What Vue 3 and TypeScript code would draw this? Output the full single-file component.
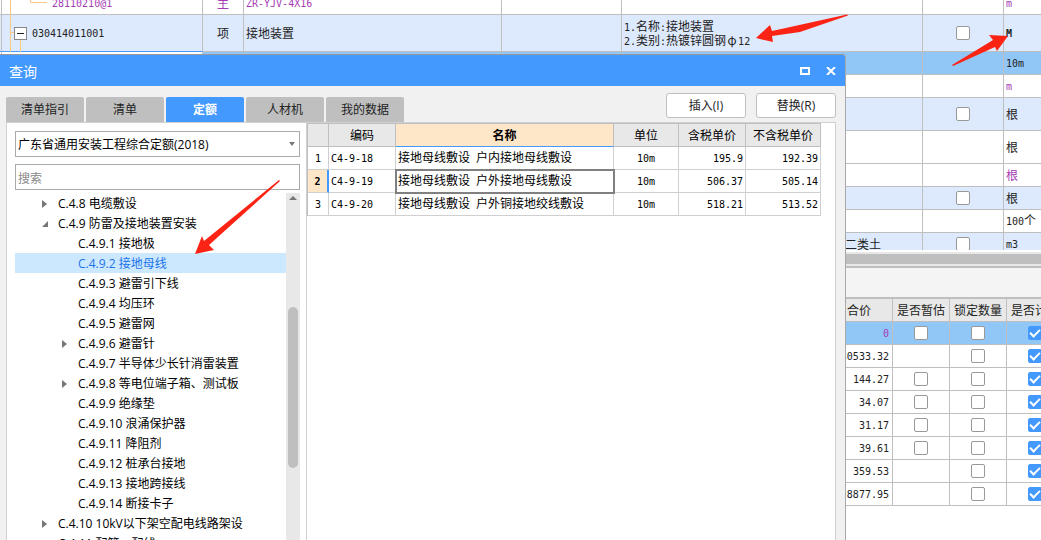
<script setup lang="ts">
import { h } from 'vue'

interface ItemRow {
  unit: string
  size: 'small' | 'medium' | 'tall'
  kind?: 'item' | 'current'
  tone?: 'purple' | 'strong'
  code?: string
  type?: string
  name?: string
  detail?: string[]
  tail?: string
  check?: boolean
}
interface CostRow {
  total: string
  estimate: boolean
  current?: boolean
}
interface TreeNode {
  label: string
  level: number
  state?: 'open' | 'closed'
  selected?: boolean
}

/* Grid text: half-width characters take exactly half a full-width cell. */
const runClass = (part: string) => (part === 'φ' ? 'symbol' : /^[\x00-\x7f]/.test(part) ? 'half' : 'full')
const GridText = (props: { text: string }) =>
  h(
    'span',
    { class: 'grid-text' },
    props.text
      .split(/([\x00-\x7f]+|φ)/)
      .filter((part) => part !== '')
      .map((part) => h('span', { class: runClass(part) }, part)),
  )
GridText.props = ['text']

const items: ItemRow[] = [
  { code: '28110210@1', type: '主', name: 'ZR-YJV-4X16', unit: 'm', size: 'small', tone: 'purple' },
  {
    code: '030414011001',
    type: '项',
    name: '接地装置',
    detail: ['1.名称:接地装置', '2.类别:热镀锌圆钢φ12'],
    unit: 'M',
    size: 'tall',
    kind: 'item',
    tone: 'strong',
    check: true,
  },
  { unit: '10m', size: 'small', kind: 'current' },
  { unit: 'm', size: 'small', tone: 'purple' },
  { unit: '根', size: 'medium', kind: 'item', check: true },
  { unit: '根', size: 'medium' },
  { unit: '根', size: 'small', tone: 'purple' },
  { unit: '根', size: 'small', kind: 'item', check: true },
  { unit: '100个', size: 'small' },
  { tail: '二类土', unit: 'm3', size: 'small', kind: 'item', check: true },
]

const costs: CostRow[] = [
  { total: '0', estimate: true, current: true },
  { total: '30533.32', estimate: false },
  { total: '144.27', estimate: true },
  { total: '34.07', estimate: true },
  { total: '31.17', estimate: true },
  { total: '39.61', estimate: true },
  { total: '359.53', estimate: false },
  { total: '8877.95', estimate: false },
]

const tabs = ['清单指引', '清单', '定额', '人材机', '我的数据']
const activeTab = '定额'

const tree: TreeNode[] = [
  { label: 'C.4.8 电缆敷设', level: 0, state: 'closed' },
  { label: 'C.4.9 防雷及接地装置安装', level: 0, state: 'open' },
  { label: 'C.4.9.1 接地极', level: 1 },
  { label: 'C.4.9.2 接地母线', level: 1, selected: true },
  { label: 'C.4.9.3 避雷引下线', level: 1 },
  { label: 'C.4.9.4 均压环', level: 1 },
  { label: 'C.4.9.5 避雷网', level: 1 },
  { label: 'C.4.9.6 避雷针', level: 1, state: 'closed' },
  { label: 'C.4.9.7 半导体少长针消雷装置', level: 1 },
  { label: 'C.4.9.8 等电位端子箱、测试板', level: 1, state: 'closed' },
  { label: 'C.4.9.9 绝缘垫', level: 1 },
  { label: 'C.4.9.10 浪涌保护器', level: 1 },
  { label: 'C.4.9.11 降阻剂', level: 1 },
  { label: 'C.4.9.12 桩承台接地', level: 1 },
  { label: 'C.4.9.13 接地跨接线', level: 1 },
  { label: 'C.4.9.14 断接卡子', level: 1 },
  { label: 'C.4.10 10kV以下架空配电线路架设', level: 0, state: 'closed' },
  { label: 'C.4.11 配管、配线', level: 0 },
]

const quotas = [
  { code: 'C4-9-18', name: '接地母线敷设 户内接地母线敷设', unit: '10m', taxed: '195.9', net: '192.39' },
  { code: 'C4-9-19', name: '接地母线敷设 户外接地母线敷设', unit: '10m', taxed: '506.37', net: '505.14' },
  { code: 'C4-9-20', name: '接地母线敷设 户外铜接地绞线敷设', unit: '10m', taxed: '518.21', net: '513.52' },
]
const currentQuota = 1
</script>

<template>
  <main class="workspace">
    <section class="items-pane">
      <table class="grid items">
        <colgroup>
          <col class="c-edge" /><col class="c-code" /><col class="c-type" /><col class="c-name" />
          <col class="c-blank" /><col class="c-detail" /><col class="c-check" /><col class="c-unit" />
        </colgroup>
        <tbody>
          <tr v-for="(row, i) in items" :key="i" :class="[row.size, row.kind, row.tone]">
            <td></td>
            <td class="code-cell">
              <svg v-if="i === 0" class="branches" width="50" height="23" aria-hidden="true">
                <path d="M8.5 0V23M28.5 0V10.5H45" />
              </svg>
              <svg v-if="i === 1" class="branches" width="30" height="37" aria-hidden="true">
                <path d="M8.5 0V37M8.5 17.5H12M18.5 24V37" />
              </svg>
              <div v-if="row.code" class="code" :class="{ leaf: i === 0 }">
                <button v-if="i === 1" class="toggle" type="button" aria-label="折叠"></button>
                <GridText :text="row.code" />
              </div>
            </td>
            <td class="center"><GridText v-if="row.type" :text="row.type" /></td>
            <td><GridText v-if="row.name" :text="row.name" /></td>
            <td></td>
            <td :class="{ continued: row.tail }">
              <div v-for="line in row.detail" :key="line" class="line"><GridText :text="line" /></div>
              <GridText v-if="row.tail" :text="row.tail" />
            </td>
            <td class="center"><input v-if="row.check" type="checkbox" :aria-label="`选择 ${row.unit}`" /></td>
            <td class="unit"><GridText :text="row.unit" /></td>
          </tr>
        </tbody>
      </table>
    </section>
    <div class="hscroll"><div class="hthumb"></div></div>
    <div class="toolbar"></div>
    <section class="costs-pane">
      <table class="grid costs">
        <colgroup>
          <col class="k-lead" /><col class="k-total" /><col class="k-check" /><col class="k-check" /><col class="k-check" />
        </colgroup>
        <thead>
          <tr>
            <th></th>
            <th><GridText text="合价" /></th>
            <th><GridText text="是否暂估" /></th>
            <th><GridText text="锁定数量" /></th>
            <th><GridText text="是否计价" /></th>
          </tr>
        </thead>
        <tbody>
          <tr v-for="(row, i) in costs" :key="i" :class="{ current: row.current, small: true }">
            <td></td>
            <td class="number" :class="{ zero: row.current }"><GridText :text="row.total" /></td>
            <td class="center"><input v-if="row.estimate" type="checkbox" aria-label="是否暂估" /></td>
            <td class="center"><input type="checkbox" aria-label="锁定数量" /></td>
            <td class="center"><input type="checkbox" checked aria-label="是否计价" /></td>
          </tr>
        </tbody>
      </table>
    </section>

    <section class="dialog" role="dialog" aria-labelledby="dialog-title">
      <header class="titlebar">
        <h1 id="dialog-title">查询</h1>
        <button type="button" aria-label="最大化">
          <svg width="10" height="8" viewBox="0 0 10 8"><path d="M1 1H9V7H1Z" /></svg>
        </button>
        <button type="button" aria-label="关闭">
          <svg width="10" height="8" viewBox="0 0 10 8"><path d="M1 0L9 8M9 0L1 8" /></svg>
        </button>
      </header>
      <div class="controls">
        <div class="tabs" role="tablist">
          <button
            v-for="tab in tabs"
            :key="tab"
            type="button"
            role="tab"
            :aria-selected="tab === activeTab"
            :class="{ active: tab === activeTab }"
          >{{ tab }}</button>
        </div>
        <div class="actions">
          <button type="button">插入(I)</button>
          <button type="button">替换(R)</button>
        </div>
      </div>
      <div class="panels">
        <aside class="browser">
          <div class="picker">
            <select aria-label="定额库">
              <option>广东省通用安装工程综合定额(2018)</option>
            </select>
            <svg width="6" height="4" viewBox="0 0 6 4" aria-hidden="true"><path d="M0 0H6L3 4Z" /></svg>
          </div>
          <input class="search" type="text" placeholder="搜索" aria-label="搜索" />
          <div class="tree-box">
            <ul class="tree" role="tree">
              <li
                v-for="node in tree"
                :key="node.label"
                role="treeitem"
                :class="{ child: node.level === 1, selected: node.selected }"
              >
                <span class="marker">
                  <svg v-if="node.state === 'closed'" width="5" height="8" viewBox="0 0 5 8"><path d="M0 0L5 4L0 8Z" /></svg>
                  <svg v-if="node.state === 'open'" width="6" height="6" viewBox="0 0 6 6"><path d="M6 0V6H0Z" /></svg>
                </span>
                <span>{{ node.label }}</span>
              </li>
            </ul>
            <div class="vscroll">
              <svg width="8" height="4" viewBox="0 0 8 4" aria-hidden="true"><path d="M0 4L4 0L8 4Z" /></svg>
              <div class="vthumb"></div>
            </div>
          </div>
        </aside>
        <div class="results">
          <table class="quota">
            <colgroup>
              <col class="q-index" /><col class="q-code" /><col class="q-name" />
              <col class="q-unit" /><col class="q-taxed" /><col class="q-net" />
            </colgroup>
            <thead>
              <tr>
                <th></th>
                <th><GridText text="编码" /></th>
                <th class="sorted"><GridText text="名称" /></th>
                <th><GridText text="单位" /></th>
                <th><GridText text="含税单价" /></th>
                <th><GridText text="不含税单价" /></th>
              </tr>
            </thead>
            <tbody>
              <tr v-for="(row, i) in quotas" :key="row.code" :class="{ chosen: i === currentQuota }">
                <th scope="row"><GridText :text="String(i + 1)" /></th>
                <td><GridText :text="row.code" /></td>
                <td class="q-title"><GridText :text="row.name" /></td>
                <td class="center"><GridText :text="row.unit" /></td>
                <td class="number"><GridText :text="row.taxed" /></td>
                <td class="number"><GridText :text="row.net" /></td>
              </tr>
            </tbody>
          </table>
        </div>
      </div>
    </section>

    <svg class="marks" aria-hidden="true">
      <path d="M756 38L770 25L772 31L847 14.5L848 15.5L800 32L772 36L773 42Z" />
      <path d="M1008 36L989 35L993 40L952 65L953 66L995 47L997 51Z" />
      <path d="M195 254L202 236L204 241L279 180L280 181L209 245L214 250Z" />
    </svg>
  </main>
</template>

<style>
body {
  margin: 0;
}
.grid-text {
  font-family: "Noto Sans CJK SC", sans-serif;
  font-size: 12px;
  white-space: pre;
}
.grid-text .half {
  font-family: "DejaVu Sans Mono", monospace;
  font-size: 10px;
}
.grid-text .symbol {
  display: inline-block;
  width: 12px;
  text-align: center;
}
</style>

<style scoped>
.workspace {
  position: relative;
  display: flex;
  flex-direction: column;
  height: 100vh;
  overflow: hidden;
  background: #fff;
  color: #222;
  font: 12px/14px "Open Sans", "Noto Sans CJK SC", sans-serif;
}
button,
input,
select {
  font: inherit;
  color: inherit;
  box-sizing: border-box;
  margin: 0;
}
button {
  padding: 0;
  border: 0;
  background: none;
}
table {
  table-layout: fixed;
  border-collapse: separate;
  border-spacing: 0;
}
th,
td {
  box-sizing: border-box;
  padding: 0 3px;
  line-height: 14px;
  text-align: left;
  vertical-align: middle;
  white-space: nowrap;
  font-weight: normal;
}
.center {
  text-align: center;
}
.number {
  text-align: right;
}

/* background grids */
.items-pane {
  flex: none;
  height: 250px;
  overflow: hidden;
}
.grid {
  width: 1084px;
}
.items {
  margin-top: -8px;
}
.grid th,
.grid td {
  border-right: 1px solid #bfbfbf;
  border-bottom: 1px solid #bfbfbf;
}
.items td {
  padding: 0 2px;
}
.c-edge { width: 2px; }
.c-code { width: 201px; }
.c-type { width: 41px; }
.c-name { width: 258px; }
.c-blank { width: 120px; }
.c-detail { width: 301px; }
.c-check { width: 81px; }
.c-unit { width: 80px; }
.grid td:first-child {
  padding: 0;
}
.small td { height: 23px; }
.medium td { height: 33px; }
.tall td { height: 37px; }
.item td { background: #dde9fd; }
.current td { background: #91c7f7; }
.items .current td:nth-child(-n + 2) {
  background: #fff;
}
.items .tall td:nth-child(-n + 2) {
  border-bottom-color: #4499ff;
}
.purple { color: #a63bb5; }
.strong .unit { font-weight: bold; }
.line {
  height: 14px;
}
.code-cell {
  position: relative;
}
.items .code-cell {
  padding: 0 0 0 12px;
}
.branches {
  position: absolute;
  left: 0;
  top: 0;
  fill: none;
  stroke: #fbc980;
}
.code {
  position: relative;
  display: flex;
  align-items: center;
  gap: 5px;
}
.code.leaf {
  padding-left: 38px;
}
.toggle {
  display: flex;
  align-items: center;
  justify-content: center;
  width: 13px;
  height: 13px;
  border: 1px solid #888;
  background: #fff;
}
.toggle::before {
  content: "";
  width: 7px;
  height: 1px;
  background: #222;
}
.items .continued {
  padding-left: 223px;
}
input[type="checkbox"] {
  appearance: none;
  display: inline-flex;
  align-items: center;
  justify-content: center;
  width: 14px;
  height: 14px;
  border: 1px solid #999;
  border-radius: 2px;
  background: #fff;
  vertical-align: middle;
}
input[type="checkbox"]:checked {
  border-color: #4499ff;
  background: #4499ff;
}
input[type="checkbox"]:checked::before {
  content: "";
  flex: none;
  width: 10px;
  height: 6px;
  margin-bottom: 3px;
  box-sizing: border-box;
  border-left: 2px solid #fff;
  border-bottom: 2px solid #fff;
  transform: rotate(-45deg);
}
.hscroll {
  flex: none;
  margin-top: 2px;
  padding: 2px 0;
  background: #e8e8e8;
}
.hthumb {
  height: 10px;
  background: #bfbfbf;
}
.toolbar {
  flex: none;
  height: 29px;
  border-top: 2px solid #bfbfbf;
  border-bottom: 2px solid #bfbfbf;
  background: #f4f4f4;
}
.costs-pane {
  overflow: hidden;
}
.costs {
  width: 1064px;
}
.k-lead { width: 826px; }
.k-total { width: 67px; }
.k-check { width: 57px; }
.costs th {
  height: 23px;
  padding: 0;
  background: #e8e8e8;
  text-align: center;
}
.zero { color: #a63bb5; }

/* query dialog */
.dialog {
  position: absolute;
  left: 0;
  top: 54px;
  bottom: 0;
  display: flex;
  flex-direction: column;
  box-sizing: border-box;
  width: 846px;
  max-width: 100%;
  overflow: hidden;
  border-top: 1px solid #999;
  border-right: 1px solid #a8a8a8;
  border-top-right-radius: 3px;
  background: #f1f1f1;
}
.titlebar {
  flex: none;
  display: flex;
  align-items: center;
  gap: 16px;
  height: 31px;
  padding: 0 9px;
  background: #4499ff;
  color: #fff;
}
.titlebar h1 {
  flex: 1;
  margin: 0;
  padding-top: 3px;
  font-size: 14px;
  font-weight: normal;
  line-height: 20px;
}
.titlebar svg {
  display: block;
  fill: none;
  stroke: #fff;
  stroke-width: 2;
}
.controls {
  flex: none;
  display: flex;
  justify-content: space-between;
  align-items: flex-end;
  height: 36px;
  padding: 0 9px 0 6px;
}
.tabs {
  display: flex;
  gap: 2px;
}
.tabs button {
  width: 78px;
  height: 25px;
  padding-top: 1px;
  border-radius: 2px 2px 0 0;
  background: #bfbfbf;
}
.tabs .active {
  background: #4499ff;
  color: #fff;
  font-weight: bold;
}
.actions {
  display: flex;
  gap: 10px;
  padding-bottom: 4px;
}
.actions button {
  width: 80px;
  height: 25px;
  border: 1px solid #bfbfbf;
  border-radius: 3px;
  background: #fff;
}
.panels {
  flex: 1;
  display: flex;
  min-height: 0;
  margin: 0 9px 0 6px;
  border: 1px solid #d0d0d0;
  border-bottom: 0;
  background: #fff;
}
.browser {
  flex: none;
  display: flex;
  flex-direction: column;
  box-sizing: border-box;
  width: 300px;
  padding: 8px 6px 0 8px;
  border-right: 1px solid #d0d0d0;
  color: #000;
}
.picker {
  position: relative;
  flex: none;
  display: flex;
  margin-bottom: 7px;
}
.picker select {
  appearance: none;
  width: 100%;
  height: 26px;
  padding: 2px 16px 0 2px;
  border: 1px solid #aaa;
  border-radius: 0;
  background: #fff;
}
.picker svg {
  position: absolute;
  right: 5px;
  top: 11px;
  fill: #777;
}
.search {
  flex: none;
  height: 26px;
  padding: 2px 2px 0;
  border: 1px solid #aaa;
  background: #fff;
}
.search::placeholder {
  color: #888;
}
.tree-box {
  flex: 1;
  display: flex;
  min-height: 0;
  margin-top: 3px;
  overflow: hidden;
}
.tree {
  flex: 1;
  margin: 0;
  padding: 0;
  list-style: none;
}
.tree li {
  display: flex;
  align-items: center;
  box-sizing: border-box;
  height: 20px;
  padding: 2px 0 0 27px;
  line-height: 18px;
  white-space: nowrap;
}
.tree .child {
  padding-left: 47px;
}
.tree .selected {
  background: #cce8ff;
  color: #1a73e8;
}
.marker {
  display: flex;
  width: 16px;
}
.marker svg {
  fill: #777;
}
.vscroll {
  flex: none;
  display: flex;
  flex-direction: column;
  align-items: center;
  width: 14px;
  padding-top: 3px;
  background: #e8e8e8;
}
.vscroll svg {
  flex: none;
  fill: #777;
}
.vthumb {
  flex: none;
  width: 10px;
  height: 161px;
  margin-top: 107px;
  border-radius: 5px;
  background: #bfbfbf;
}
.results {
  flex: 1;
  min-width: 0;
  overflow: hidden;
}
.quota {
  width: 514px;
  border-top: 1px solid #bfbfbf;
  border-left: 1px solid #bfbfbf;
  color: #000;
}
.q-index { width: 21px; }
.q-code { width: 67px; }
.q-name { width: 218px; }
.q-unit { width: 65px; }
.q-taxed { width: 67px; }
.q-net { width: 75px; }
.quota th,
.quota td {
  height: 23px;
  padding: 0 2px;
  border-right: 1px solid #d0d0d0;
  border-bottom: 1px solid #d0d0d0;
}
.quota th {
  padding: 0;
  text-align: center;
}
.quota thead th {
  border-color: #bfbfbf;
  background: #e8e8e8;
}
.quota thead .sorted {
  border-bottom-color: #4499ff;
  background: #fee6c8;
  font-weight: bold;
}
.quota .chosen th {
  border-right: 2px solid #4499ff;
  background: #fee6c8;
  font-weight: bold;
}
.quota .chosen .q-title {
  outline: 2px solid #808080;
  outline-offset: -1px;
}

/* red pointers drawn over everything */
.marks {
  position: absolute;
  inset: 0;
  width: 100%;
  height: 100%;
  pointer-events: none;
  fill: #fb2414;
}
</style>
